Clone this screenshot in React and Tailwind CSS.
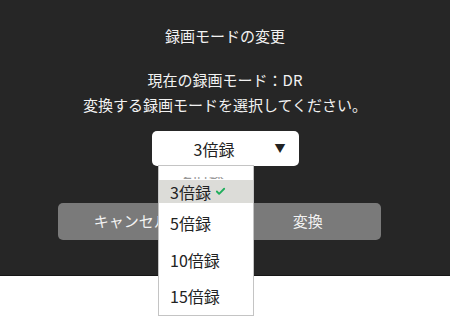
import { Check } from "lucide-react";

const modes = ["3倍録", "5倍録", "10倍録", "15倍録"];

const App = () => {
    const selected = "3倍録";
    return (
        <div className="relative w-[450px] h-[319px] bg-white text-[15px] font-['Noto_Sans_CJK_JP',_'Noto_Sans',_sans-serif]">
            <div className="h-[276px] bg-[#262626] border-b border-[#161616] flex flex-col items-center text-[#f2f2f2]">
                <h2 className="mt-[25px] leading-[22px]">録画モードの変更</h2>
                <p className="mt-[22px] leading-[22px]">現在の録画モード：DR</p>
                <p className="mt-[3px] leading-[22px]">変換する録画モードを選択してください。</p>
                <div className="mt-[15px] w-[147px] h-[35px] bg-white rounded-[5px] flex items-center text-[#222]">
                    <span className="flex-1 text-center text-[16px] pl-[2px]">{selected}</span>
                    <span className="mr-[13px] text-[11px] leading-none">▼</span>
                </div>
                <div className="mt-[37px] mr-[11px] w-[323px] flex gap-[14px]">
                    <button className="flex-1 h-[37px] rounded-[5px] bg-[#7a7a7a] text-[#f2f2f2] pr-[8px]">キャンセル</button>
                    <button className="flex-1 h-[37px] rounded-[5px] bg-[#7a7a7a] text-[#f2f2f2] pl-[8px]">変換</button>
                </div>
            </div>

            {/* open option list, scrolled so the previous item just peeks */}
            <div className="absolute left-[158px] top-[165px] w-[96px] h-[151px] bg-white border border-[#c4c4c4] overflow-hidden text-[16px] text-[#222]">
                <div className="h-[14px] pt-[11px] pl-[24px]">
                    <div className="h-[2px] overflow-hidden text-[#999]">
                        <span className="block mt-[-13px] leading-[16px]">2倍録</span>
                    </div>
                </div>
                <ul>
                    {modes.map((m) => (
                        m === selected ? (
                            <li key={m} className="h-[23px] bg-[#dcdcd8] flex items-center pl-[11px] gap-[4px]">
                                {m}
                                <Check className="w-[11px] h-[11px] text-[#1fae5c]" strokeWidth={4} />
                            </li>
                        ) : (
                            <li key={m} className="h-[36.5px] flex items-center pl-[11px] pt-[4px]">{m}</li>
                        )
                    ))}
                </ul>
            </div>
        </div>
    );
};

export default App;
